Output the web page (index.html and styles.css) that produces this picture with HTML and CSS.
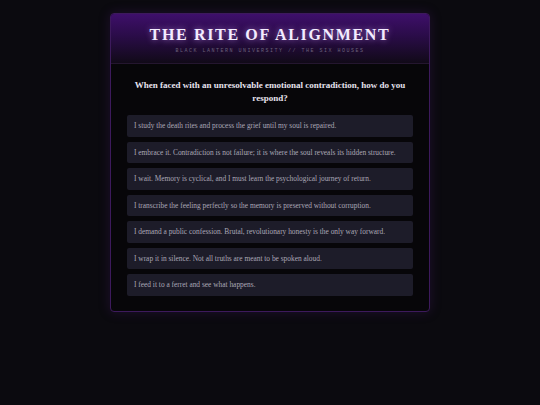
FILE: index.html
```html
<!DOCTYPE html>
<html>
<head>
<meta charset="utf-8">
<link rel="stylesheet" href="styles.css">
</head>
<body>
<div class="card">
  <div class="header">
    <h1 class="title">THE RITE OF ALIGNMENT</h1>
    <div class="subtitle">BLACK LANTERN UNIVERSITY // THE SIX HOUSES</div>
  </div>
  <div class="content">
    <p class="question">When faced with an unresolvable emotional contradiction, how do you respond?</p>
    <div class="options">
      <div class="option">I study the death rites and process the grief until my soul is repaired.</div>
      <div class="option">I embrace it. Contradiction is not failure; it is where the soul reveals its hidden structure.</div>
      <div class="option">I wait. Memory is cyclical, and I must learn the psychological journey of return.</div>
      <div class="option">I transcribe the feeling perfectly so the memory is preserved without corruption.</div>
      <div class="option">I demand a public confession. Brutal, revolutionary honesty is the only way forward.</div>
      <div class="option">I wrap it in silence. Not all truths are meant to be spoken aloud.</div>
      <div class="option">I feed it to a ferret and see what happens.</div>
    </div>
  </div>
</div>
</body>
</html>
```
FILE: styles.css
```css
html, body {
  margin: 0;
  padding: 0;
}
body {
  background: #0b0a0f;
  font-family: "Liberation Serif", Georgia, serif;
  min-height: 405px;
}
.card {
  width: 318px;
  margin: 13px auto 0;
  border: 1px solid #3d1a5c;
  border-radius: 4px;
  background: #070609;
  box-shadow: 0 0 12px rgba(90, 30, 140, 0.25);
  overflow: hidden;
}
.header {
  height: 49px;
  border-bottom: 1px solid #24162f;
  background: linear-gradient(to bottom, #3e0f6a 0%, #2a0c48 45%, #110a18 100%);
  display: flex;
  flex-direction: column;
  align-items: center;
}
.title {
  margin: 12px 0 0;
  font-family: "Liberation Serif", serif;
  font-weight: bold;
  font-size: 16px;
  line-height: 18px;
  letter-spacing: 1.65px;
  color: #f4ecff;
  text-shadow: 0 0 6px rgba(210, 160, 255, 0.7);
}
.subtitle {
  margin-top: 4px;
  font-family: "Liberation Mono", monospace;
  font-size: 5px;
  letter-spacing: 1.5px;
  color: #6a607a;
  line-height: 6px;
}
.content {
  padding: 15px 16px 15px;
}
.question {
  margin: 0 0 10px;
  text-align: center;
  font-size: 9px;
  line-height: 13px;
  font-weight: bold;
  color: #e6e2ee;
}
.options {
  display: flex;
  flex-direction: column;
  gap: 5px;
}
.option {
  background: #1d1c29;
  border-radius: 2px;
  height: 21.5px;
  display: flex;
  align-items: center;
  padding: 0 7px;
  font-size: 7.4px;
  color: #aaa7b6;
}
```
